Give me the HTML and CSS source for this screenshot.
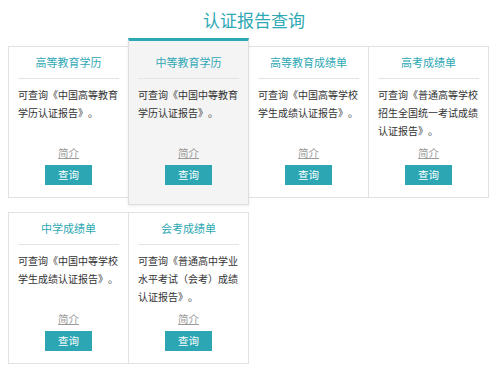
FILE: index.html
```html
<!DOCTYPE html>
<html lang="zh-CN">
<head>
<meta charset="utf-8">
<title>认证报告查询</title>
<link rel="stylesheet" href="styles.css">
</head>
<body>
<div class="page">
  <h1 class="page-title">认证报告查询</h1>
  <div class="cards">
    <div class="card">
      <div class="card-title">高等教育学历</div>
      <p class="card-desc">可查询《中国高等教育学历认证报告》。</p>
      <a class="card-link" href="#">简介</a>
      <a class="card-btn" href="#">查询</a>
    </div>
    <div class="card card-active">
      <div class="card-title">中等教育学历</div>
      <p class="card-desc">可查询《中国中等教育学历认证报告》。</p>
      <a class="card-link" href="#">简介</a>
      <a class="card-btn" href="#">查询</a>
    </div>
    <div class="card">
      <div class="card-title">高等教育成绩单</div>
      <p class="card-desc">可查询《中国高等学校学生成绩认证报告》。</p>
      <a class="card-link" href="#">简介</a>
      <a class="card-btn" href="#">查询</a>
    </div>
    <div class="card">
      <div class="card-title">高考成绩单</div>
      <p class="card-desc">可查询《普通高等学校招生全国统一考试成绩认证报告》。</p>
      <a class="card-link" href="#">简介</a>
      <a class="card-btn" href="#">查询</a>
    </div>
    <div class="card">
      <div class="card-title">中学成绩单</div>
      <p class="card-desc">可查询《中国中等学校学生成绩认证报告》。</p>
      <a class="card-link" href="#">简介</a>
      <a class="card-btn" href="#">查询</a>
    </div>
    <div class="card">
      <div class="card-title">会考成绩单</div>
      <p class="card-desc">可查询《普通高中学业水平考试（会考）成绩认证报告》。</p>
      <a class="card-link" href="#">简介</a>
      <a class="card-btn" href="#">查询</a>
    </div>
  </div>
</div>
</body>
</html>
```

FILE: styles.css
```css
html, body {
  margin: 0;
  padding: 0;
  background: #ffffff;
}

body {
  font-family: "Noto Sans CJK SC", "Noto Sans", sans-serif;
  color: #333333;
  text-spacing-trim: space-all;
}

.page {
  width: 500px;
  padding: 0 0 0 8px;
  box-sizing: border-box;
}

.page-title {
  margin: 0;
  height: 46px;
  padding-top: 9px;
  box-sizing: border-box;
  font-size: 17px;
  line-height: 22px;
  font-weight: normal;
  text-align: center;
  color: #2ea8b4;
}

.cards {
  display: flex;
  flex-wrap: wrap;
  align-items: flex-start;
  row-gap: 14px;
  width: 482px;
}

.card {
  width: 121px;
  height: 152px;
  box-sizing: border-box;
  margin-right: -1px;
  padding: 0 9px;
  border: 1px solid #e2e2e2;
  background: #ffffff;
  display: flex;
  flex-direction: column;
  align-items: center;
  position: relative;
}

.card-active {
  height: 167px;
  margin-top: -8px;
  margin-bottom: -7px;
  padding-top: 6px;
  background: #f4f4f4;
  border-color: #dedede;
  border-top: 3px solid #2ea8b4;
  z-index: 1;
  box-shadow: 0 1px 3px rgba(0, 0, 0, 0.08);
}

.card-title {
  align-self: stretch;
  height: 31px;
  line-height: 31px;
  font-size: 11px;
  text-align: center;
  color: #2ea8b4;
  border-bottom: 1px solid #e4e4e4;
  flex-shrink: 0;
}

.card-desc {
  align-self: stretch;
  margin: 7px 0 0;
  height: 54px;
  font-size: 10px;
  line-height: 18px;
  color: #333333;
  flex-shrink: 0;
}

.card-link {
  margin-top: 5px;
  font-size: 10.5px;
  line-height: 16px;
  color: #999999;
  text-decoration: underline;
}

.card-btn {
  margin-top: 4px;
  width: 47px;
  height: 20px;
  line-height: 20px;
  font-size: 10.5px;
  text-align: center;
  color: #ffffff;
  background: #2ba6b2;
  text-decoration: none;
}
```
